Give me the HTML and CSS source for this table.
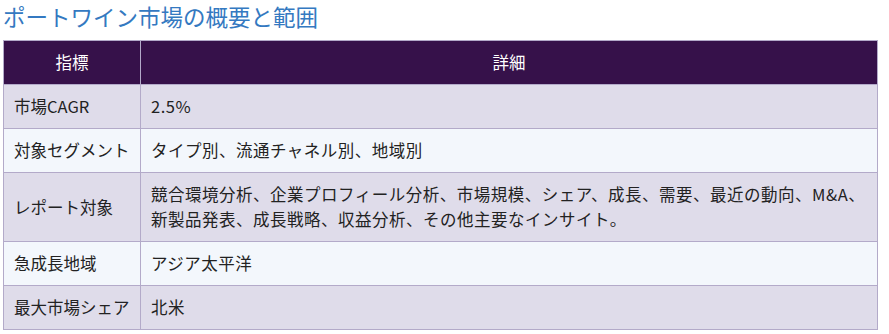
FILE: index.html
```html
<!DOCTYPE html>
<html lang="ja">
<head>
<meta charset="utf-8">
<title>ポートワイン市場の概要と範囲</title>
<link rel="stylesheet" href="styles.css">
</head>
<body>
<div class="page">
  <h2 class="title">ポートワイン市場の概要と範囲</h2>
  <table class="summary">
    <thead>
      <tr><th class="col-key">指標</th><th>詳細</th></tr>
    </thead>
    <tbody>
      <tr class="odd"><td>市場CAGR</td><td class="val">2.5%</td></tr>
      <tr class="even"><td>対象セグメント</td><td class="val">タイプ別、流通チャネル別、地域別</td></tr>
      <tr class="odd"><td>レポート対象</td><td class="val">競合環境分析、企業プロフィール分析、市場規模、シェア、成長、需要、最近の動向、M&amp;A、<br>新製品発表、成長戦略、収益分析、その他主要なインサイト。</td></tr>
      <tr class="even"><td>急成長地域</td><td class="val">アジア太平洋</td></tr>
      <tr class="odd"><td>最大市場シェア</td><td class="val">北米</td></tr>
    </tbody>
  </table>
</div>
</body>
</html>
```
FILE: styles.css
```css
html, body {
  margin: 0;
  padding: 0;
  background: #ffffff;
}
body {
  font-family: "Noto Sans CJK JP", "Noto Sans", sans-serif;
  color: #222222;
}
.page {
  width: 875px;
  padding: 0 0 0 3px;
  background: #ffffff;
}
.title {
  margin: 0;
  height: 40px;
  font-size: 22.5px;
  line-height: 32px;
  font-weight: 400;
  color: #3479c1;
}
.summary {
  width: 875px;
  border-collapse: collapse;
  font-size: 16.5px;
  line-height: 25px;
}
.summary th,
.summary td {
  border: 1px solid #b3aac9;
  padding: 9px 10px;
  text-align: left;
  vertical-align: middle;
  white-space: nowrap;
}
.summary td.val {
  letter-spacing: 0.5px;
}
.summary th {
  background: #36114a;
  color: #ffffff;
  font-weight: 400;
  text-align: center;
}
.summary .col-key {
  width: 116px;
}
.summary tr.odd td {
  background: #dfdcea;
}
.summary tr.even td {
  background: #f3f7fc;
}
```
